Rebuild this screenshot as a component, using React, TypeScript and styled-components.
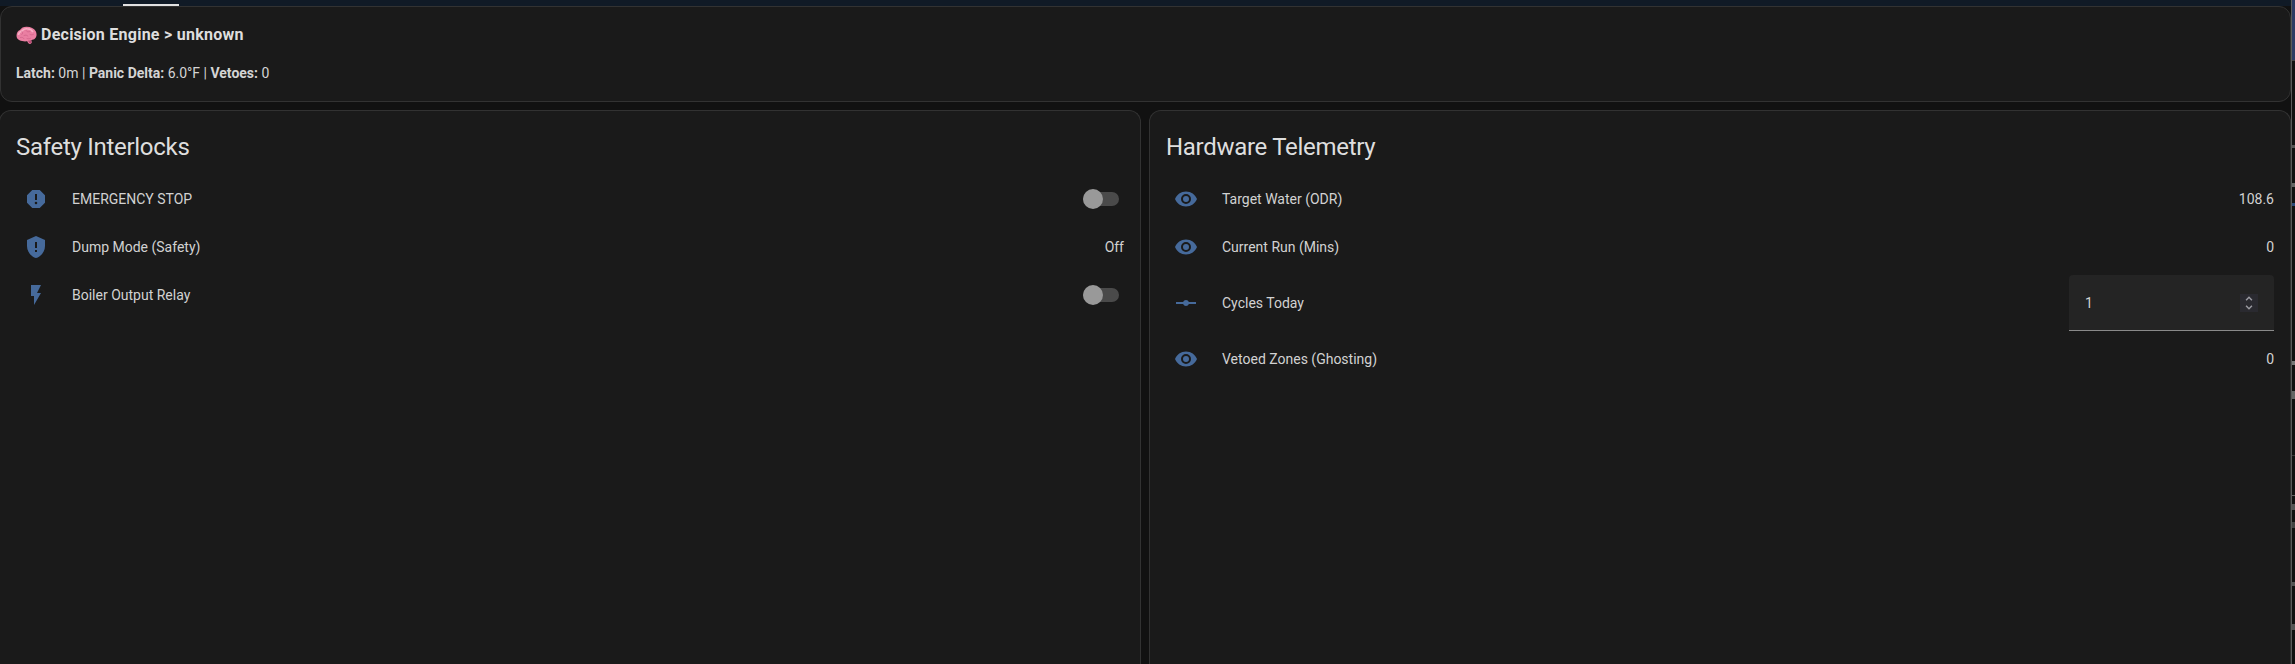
import React from "react";
import styled, { createGlobalStyle } from "styled-components";

const Global = createGlobalStyle`
  html, body { margin: 0; padding: 0; background: #111111; overflow: hidden; }
  * { box-sizing: border-box; }
`;

const Page = styled.div`
  display: flex;
  width: 2295px;
  height: 664px;
  overflow: hidden;
  background: #111111;
  color: #e1e1e1;
  font-family: Roboto, "Liberation Sans", sans-serif;
`;

const Main = styled.main`
  flex: 0 0 2291px;
  display: flex;
  flex-direction: column;
  gap: 8px;
  min-width: 0;
`;

const TopBar = styled.div`
  flex: 0 0 6px;
  margin-bottom: -8px;
  background: #101a26;
  display: flex;
  align-items: flex-end;
  padding-left: 123px;
`;

const TabMark = styled.div`
  width: 56px;
  height: 2px;
  background: #e1e1e1;
`;

const Card = styled.section`
  background: #1a1a1a;
  border: 1px solid #323232;
  border-radius: 12px;
`;

const SummaryCard = styled(Card)`
  flex: 0 0 96px;
  padding: 16px 15px;
`;

const SummaryTitle = styled.h4`
  display: flex;
  align-items: center;
  gap: 4px;
  margin: 0;
  height: 24px;
  font-size: 16px;
  line-height: 24px;
  font-weight: 700;
  letter-spacing: 0.25px;
  color: #dedede;
`;

const SummaryLine = styled.p`
  margin: 16px 0 0;
  font-size: 14px;
  line-height: 20px;
  color: #d4d4d4;
  strong { font-weight: 700; }
`;

const Columns = styled.div`
  flex: 1 1 auto;
  display: grid;
  grid-template-columns: 1fr 1fr;
  gap: 8px;
  min-height: 0;
  margin-left: -1px;
`;

const Panel = styled(Card)`
  border-bottom: none;
  border-bottom-left-radius: 0;
  border-bottom-right-radius: 0;
  height: 620px;
  padding: 0 16px;
`;

const PanelTitle = styled.h2`
  margin: 0;
  padding-top: 20px;
  height: 68px;
  font-size: 24px;
  line-height: 32px;
  font-weight: 400;
  letter-spacing: -0.288px;
  color: #dedede;
`;

const Rows = styled.div`
  display: flex;
  flex-direction: column;
  gap: 8px;
`;

const Row = styled.div<{ $tall?: boolean }>`
  display: flex;
  align-items: center;
  height: ${(p) => (p.$tall ? 56 : 40)}px;
`;

const IconSlot = styled.div`
  flex: 0 0 40px;
  width: 40px;
  height: 40px;
  display: flex;
  align-items: center;
  justify-content: center;
  color: #466a9b;
`;

const Label = styled.div`
  margin-left: 16px;
  flex: 1 1 auto;
  padding-bottom: 1px;
  font-size: 14px;
  line-height: 20px;
  color: #d2d2d2;
`;

const Value = styled.div`
  padding-bottom: 1px;
  font-size: 14px;
  line-height: 20px;
  color: #d2d2d2;
`;

const SwitchTrack = styled.div`
  position: relative;
  width: 36px;
  height: 14px;
  margin-right: 5px;
  border-radius: 7px;
  background: #4a4a4a;
`;

const SwitchThumb = styled.div`
  position: absolute;
  left: 0;
  top: -3px;
  width: 20px;
  height: 20px;
  border-radius: 50%;
  background: #999999;
`;

const NumberField = styled.div`
  display: flex;
  align-items: center;
  justify-content: space-between;
  width: 205px;
  height: 56px;
  padding: 0 16px;
  background: #242424;
  border-bottom: 1px solid #8a8a8a;
  border-radius: 4px 4px 0 0;
  font-size: 14px;
  color: #d2d2d2;
`;

const Spinner = styled.div`
  display: flex;
  align-items: center;
  justify-content: center;
  width: 18px;
  height: 18px;
  background: #2a2a30;
  color: #9c9ca3;
`;

const Strip = styled.aside`
  flex: 0 0 4px;
  display: flex;
  flex-direction: column;
  overflow: hidden;
  border-left: 1px solid #5a5a5a;
  background: #111111;
`;

const StripBanner = styled.div`
  flex: 0 0 61px;
  background: #2d3a63;
  border-bottom: 1px solid #444;
`;

const StripMark = styled.div<{ $top: number; $h: number; $color: string }>`
  flex: 0 0 ${(p) => p.$h}px;
  margin-top: ${(p) => p.$top}px;
  background: ${(p) => p.$color};
`;

const Mdi = ({ d, size = 24 }: { d: string; size?: number }) => (
  <svg width={size} height={size} viewBox="0 0 24 24" fill="currentColor">
    <path d={d} />
  </svg>
);

const Brain = () => (
  <svg width="21" height="19" viewBox="0 0 21 19">
    <path
      d="M.6 10.5C.2 7.5 1.600 5 4 4 5.200 1.700 8 .5 10.800.7c4 .1 7.300 1.600 8.800 4.300 1.500 2.600 1.200 5.600-.6 7.600-1.100 1.100-2.500 1.500-3.700 1.400l.4 2c.2 1.100-.6 2-1.800 1.900-1.300-.1-2.200-1-2.600-2.600-2.600.3-5.600.1-7.800-1C1.800 13.400.8 12.200.6 10.500Z"
      fill="#ea7fa2"
    />
    <path
      d="M2.500 9c.2-2 1.500-3.500 3.500-4 1-1.600 3-2.400 5-2.200 2.600.2 5 1.400 6 3.200"
      fill="none"
      stroke="#f7b0c5"
      strokeWidth="1.600"
    />
    <path
      d="M6 5.500c1 1 1 2-.2 3M10 4.500c.8 1.500 2.500 1.800 4 1M8 9.500c1.500-.8 3-.5 4 .8M14 8.500c1 .6 2.500.5 3.500-.2M4.500 11.500c1.500-.5 2.800 0 3.500 1.200M11 12.500c1.200.4 2.400.4 3.500-.2"
      fill="none"
      stroke="#d0638a"
      strokeWidth="0.800"
      strokeLinecap="round"
    />
    <path d="M12 14.500c.8.300 1.800.2 3-.5l.4 2.300c.1.700-.4 1.200-1.100 1.100-1-.1-1.900-1.300-2.300-2.900Z" fill="#b84d74" />
  </svg>
);

const paths = {
  octagon:
    "M13,13H11V7H13M12,17.3A1.3,1.3 0 0,1 10.7,16A1.3,1.3 0 0,1 12,14.7A1.3,1.3 0 0,1 13.3,16A1.3,1.3 0 0,1 12,17.3M15.73,3H8.27L3,8.27V15.73L8.27,21H15.73L21,15.73V8.27L15.73,3Z",
  shield:
    "M12,1L3,5V11C3,16.55 6.84,21.74 12,23C17.16,21.74 21,16.55 21,11V5L12,1M13,17H11V15H13V17M13,13H11V7H13V13Z",
  flash: "M7,2V13H10V22L17,10H13L17,2H7Z",
  eye: "M12,9A3,3 0 0,0 9,12A3,3 0 0,0 12,15A3,3 0 0,0 15,12A3,3 0 0,0 12,9M12,17A5,5 0 0,1 7,12A5,5 0 0,1 12,7A5,5 0 0,1 17,12A5,5 0 0,1 12,17M12,4.5C7,4.5 2.73,7.61 1,12C2.73,16.39 7,19.5 12,19.5C17,19.5 21.27,16.39 23,12C21.27,7.61 17,4.5 12,4.5Z",
  ray: "M2,11H9.17C9.58,9.83 10.69,9 12,9C13.31,9 14.42,9.83 14.83,11H22V13H14.83C14.42,14.17 13.31,15 12,15C10.69,15 9.58,14.17 9.17,13H2V11Z",
  unfold:
    "M12,18.17L8.83,15L7.41,16.41L12,21L16.59,16.41L15.17,15M12,5.83L15.17,9L16.59,7.59L12,3L7.41,7.59L8.83,9L12,5.83Z",
};

const Switch = () => (
  <SwitchTrack>
    <SwitchThumb />
  </SwitchTrack>
);

const EntityRow = ({
  icon,
  label,
  children,
  tall,
}: {
  icon: string;
  label: string;
  children: React.ReactNode;
  tall?: boolean;
}) => (
  <Row $tall={tall}>
    <IconSlot>
      <Mdi d={icon} />
    </IconSlot>
    <Label>{label}</Label>
    {children}
  </Row>
);

const stripMarks = [
  { top: 84, h: 3, color: "#555" },
  { top: 35, h: 4, color: "#666" },
  { top: 16, h: 3, color: "#2d4a7a" },
  { top: 155, h: 4, color: "#777" },
  { top: 26, h: 8, color: "#666" },
  { top: 56, h: 1, color: "#3a3a3a" },
  { top: 39, h: 1, color: "#666" },
  { top: 8, h: 6, color: "#555" },
  { top: 12, h: 6, color: "#444" },
  { top: 54, h: 4, color: "#555" },
  { top: 38, h: 6, color: "#555" },
];

export default function App() {
  return (
    <>
      <Global />
      <Page>
        <Main>
          <TopBar>
            <TabMark />
          </TopBar>
          <SummaryCard>
            <SummaryTitle>
              <Brain />
              Decision Engine &gt; unknown
            </SummaryTitle>
            <SummaryLine>
              <strong>Latch:</strong> 0m | <strong>Panic Delta:</strong> 6.0°F | <strong>Vetoes:</strong> 0
            </SummaryLine>
          </SummaryCard>
          <Columns>
            <Panel>
              <PanelTitle>Safety Interlocks</PanelTitle>
              <Rows>
                <EntityRow icon={paths.octagon} label="EMERGENCY STOP">
                  <Switch />
                </EntityRow>
                <EntityRow icon={paths.shield} label="Dump Mode (Safety)">
                  <Value>Off</Value>
                </EntityRow>
                <EntityRow icon={paths.flash} label="Boiler Output Relay">
                  <Switch />
                </EntityRow>
              </Rows>
            </Panel>
            <Panel>
              <PanelTitle>Hardware Telemetry</PanelTitle>
              <Rows>
                <EntityRow icon={paths.eye} label="Target Water (ODR)">
                  <Value>108.6</Value>
                </EntityRow>
                <EntityRow icon={paths.eye} label="Current Run (Mins)">
                  <Value>0</Value>
                </EntityRow>
                <EntityRow icon={paths.ray} label="Cycles Today" tall>
                  <NumberField>
                    1
                    <Spinner>
                      <Mdi d={paths.unfold} size={18} />
                    </Spinner>
                  </NumberField>
                </EntityRow>
                <EntityRow icon={paths.eye} label="Vetoed Zones (Ghosting)">
                  <Value>0</Value>
                </EntityRow>
              </Rows>
            </Panel>
          </Columns>
        </Main>
        <Strip>
          <StripBanner />
          {stripMarks.map((m, i) => (
            <StripMark key={i} $top={m.top} $h={m.h} $color={m.color} />
          ))}
        </Strip>
      </Page>
    </>
  );
}
